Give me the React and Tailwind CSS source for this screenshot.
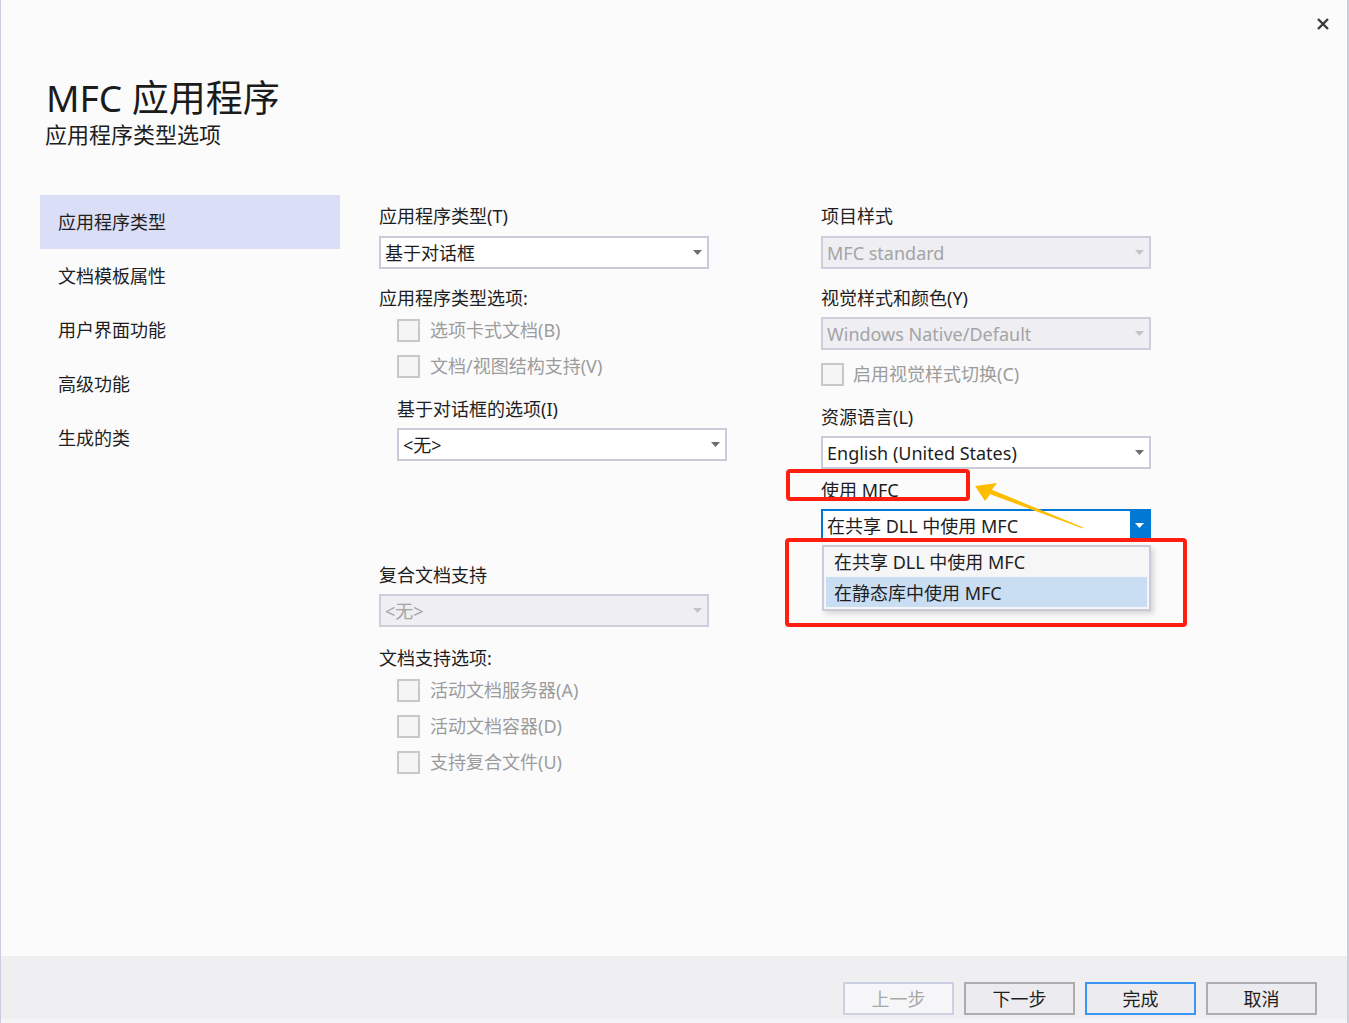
import React from 'react';

const Caret = ({ color = '#6e6e6e' }) => (
  <svg width="9" height="5" viewBox="0 0 9 5">
    <path d="M0 0h9L4.5 5z" fill={color} />
  </svg>
);

const Label = ({ children, className = '' }) => (
  <div className={`h-8 flex items-center text-[18px] text-[#1e1e1e] ${className}`}>{children}</div>
);

const Select = ({ value, disabled = false, className = '' }) => (
  <div
    className={`h-[33px] w-[330px] border-2 flex items-center justify-between pl-[4px] pr-[5px] text-[18px] ${
      disabled
        ? 'bg-[#eeeef3] border-[#cdcfdc] text-[#a4a4a4]'
        : 'bg-white border-[#c9cbd9] text-[#1e1e1e]'
    } ${className}`}
  >
    <span className="truncate pt-[2px]">{value}</span>
    <Caret color={disabled ? '#c4c4c8' : '#6e6e6e'} />
  </div>
);

const Check = ({ label, className = '' }) => (
  <div className={`h-8 flex items-center gap-[10px] ${className}`}>
    <div className="w-[23px] h-[23px] border-2 border-[#c8c8c8] bg-[#f5f5f5]" />
    <span className="text-[18px] text-[#9c9c9c] pt-px">{label}</span>
  </div>
);

const navItems = ['应用程序类型', '文档模板属性', '用户界面功能', '高级功能', '生成的类'];

export default function App() {
  return (
    <div className="relative w-[1349px] h-[1023px] flex flex-col bg-[#fbfbfc] border-l border-r-2 border-[#cacce0] font-['Noto_Sans','Noto_Sans_CJK_SC',sans-serif] overflow-hidden">
      {/* top bar with close */}
      <div className="h-[48px] flex justify-end items-center pr-[18px]">
        <svg width="12" height="12" viewBox="0 0 12 12">
          <path d="M1 1l10 10M11 1L1 11" stroke="#3a3a3a" strokeWidth="2.4" />
        </svg>
      </div>

      {/* header */}
      <div className="mt-[28px] pl-[45px]">
        <div className="text-[37px] leading-[44px] text-[#1b1b1b]">MFC 应用程序</div>
        <div className="text-[22px] leading-[28px] text-[#1e1e1e] -ml-px">应用程序类型选项</div>
      </div>

      {/* body */}
      <div className="flex flex-1 mt-[47px]">
        <nav className="ml-[39px] w-[300px]">
          {navItems.map((item, i) => (
            <div
              key={item}
              className={`h-[54px] flex items-center pl-[18px] text-[18px] text-[#1e1e1e] ${
                i === 0 ? 'bg-[#dadff7]' : ''
              }`}
            >
              {item}
            </div>
          ))}
        </nav>

        {/* middle column */}
        <div className="ml-[39px] w-[442px] pt-[5px]">
          <Label>应用程序类型(T)</Label>
          <Select value="基于对话框" className="mt-1" />
          <Label className="mt-[13px]">应用程序类型选项:</Label>
          <Check label="选项卡式文档(B)" className="pl-[18px]" />
          <Check label="文档/视图结构支持(V)" className="pl-[18px] mt-1" />
          <Label className="mt-[11px] ml-[18px]">基于对话框的选项(I)</Label>
          <Select value="<无>" className="mt-[3px] ml-[18px]" />
          <Label className="mt-[98px]">复合文档支持</Label>
          <Select value="<无>" disabled className="mt-[3px]" />
          <Label className="mt-[15px]">文档支持选项:</Label>
          <Check label="活动文档服务器(A)" className="pl-[18px]" />
          <Check label="活动文档容器(D)" className="pl-[18px] mt-1" />
          <Check label="支持复合文件(U)" className="pl-[18px] mt-1" />
        </div>

        {/* right column */}
        <div className="w-[330px] pt-[5px]">
          <Label>项目样式</Label>
          <Select value="MFC standard" disabled className="mt-1" />
          <Label className="mt-[13px]">视觉样式和颜色(Y)</Label>
          <Select value="Windows Native/Default" disabled className="mt-[3px]" />
          <div className="mt-[8px] h-8 flex items-center gap-[9px]">
            <div className="w-[23px] h-[23px] border-2 border-[#c8c8c8] bg-[#f5f5f5]" />
            <span className="text-[18px] text-[#9c9c9c] pt-px">启用视觉样式切换(C)</span>
          </div>
          <Label className="mt-[11px]">资源语言(L)</Label>
          <Select value="English (United States)" className="mt-[3px]" />
          <Label className="mt-[5px]">使用 MFC</Label>
          <div className="relative mt-[3px]">
            <div className="h-[33px] w-[330px] border-2 border-[#0078d4] bg-white flex items-stretch text-[18px] text-[#1e1e1e]">
              <span className="flex-1 flex items-center pl-[4px] pt-[2px]">在共享 DLL 中使用 MFC</span>
              <div className="w-[19px] bg-[#0078d4] flex items-center justify-center">
                <Caret color="#ffffff" />
              </div>
            </div>
            {/* open list */}
            <div className="absolute left-[1px] top-[36px] w-[329px] h-[66px] border-2 border-[#c9cbd9] bg-[#f6f6f6] shadow-[3px_3px_5px_rgba(0,0,0,0.14)] text-[18px] text-[#1e1e1e]">
              <div className="h-[30px] flex items-center pl-[10px] pt-px">在共享 DLL 中使用 MFC</div>
              <div className="h-[30px] mx-[2px] flex items-center pl-[8px] pt-[2px] bg-[#c9ddf3]">在静态库中使用 MFC</div>
            </div>
          </div>
        </div>
      </div>

      {/* footer */}
      <div className="h-[63px] bg-[#efeff2] flex justify-end items-end gap-[10px] pr-[30px] pb-[4px] text-[18px]">
        <button className="w-[111px] h-[33px] pt-[2px] border-2 border-[#cdd0e0] bg-[#f6f6f8] text-[#a8a8a8]">上一步</button>
        <button className="w-[111px] h-[33px] pt-[2px] border-2 border-[#adadad] bg-[#ececf0] text-[#1e1e1e]">下一步</button>
        <button className="w-[111px] h-[33px] pt-[2px] border-2 border-[#3b95f5] bg-[#ececf0] text-[#1e1e1e]">完成</button>
        <button className="w-[111px] h-[33px] pt-[2px] border-2 border-[#adadad] bg-[#ececf0] text-[#1e1e1e]">取消</button>
      </div>
      <div className="h-[4px] bg-[#f4f4f6]" />

      {/* annotations */}
      <div className="absolute left-[785px] top-[469px] w-[184px] h-[32px] border-4 border-[#ff1e10] rounded-[4px]" />
      <div className="absolute left-[784px] top-[538px] w-[402px] h-[89px] border-4 border-[#ff1e10] rounded-[4px]" />
      <svg className="absolute left-[969px] top-[478px]" width="120" height="56" viewBox="0 0 120 56">
        <polygon
          points="5,8 27,5 21.9,11.7 113.2,49.5 112.8,50.5 20.1,16.3 15,23"
          fill="#ffbd00"
        />
      </svg>
    </div>
  );
}
